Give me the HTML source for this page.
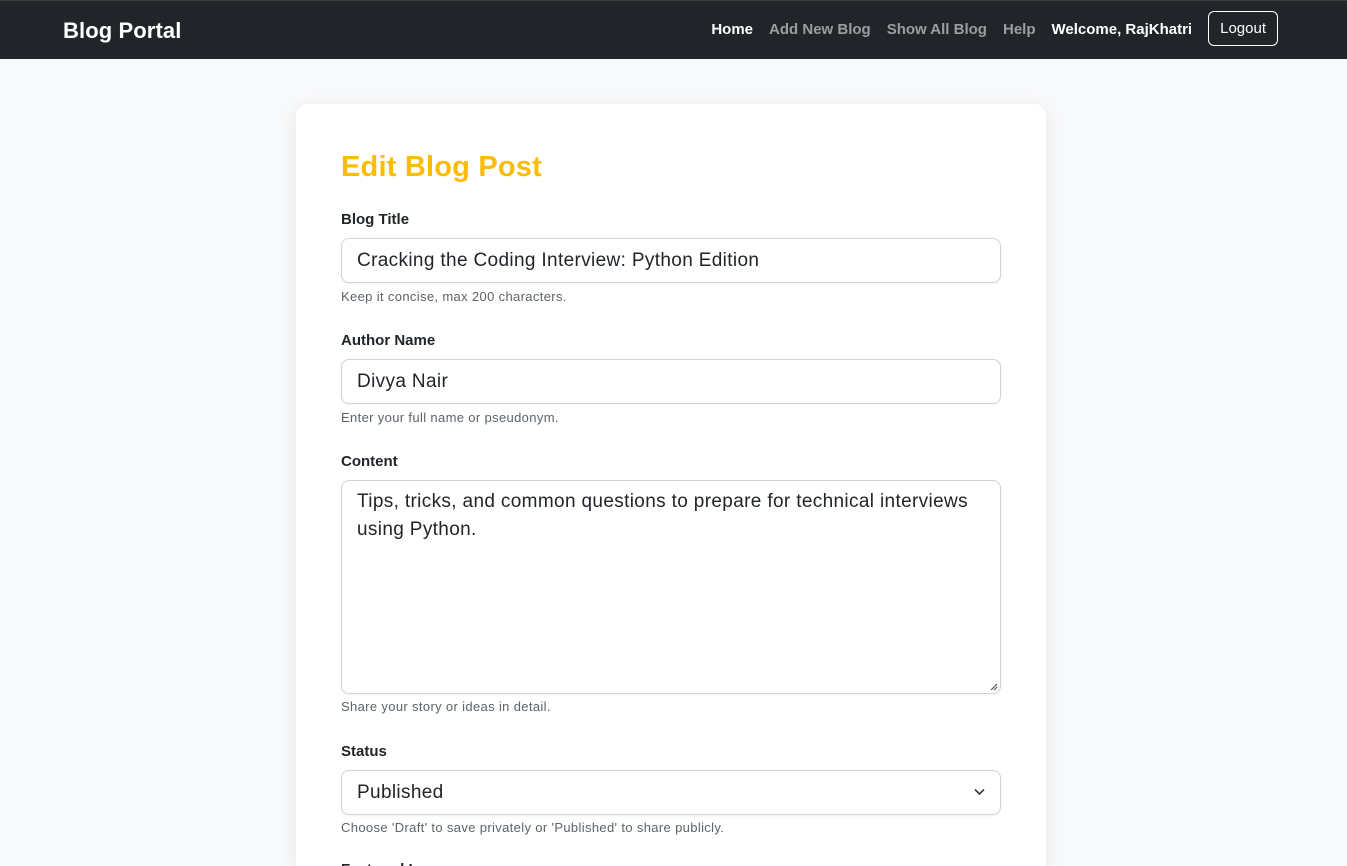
<!DOCTYPE html>
<html><head><meta charset="utf-8"><style>
*{box-sizing:border-box;margin:0;padding:0}
html,body{width:1347px;height:866px;overflow:hidden}
body{background:#f8f9fa;font-family:"Liberation Sans",sans-serif;color:#212529;position:relative}
.nav{height:59px;background:#212529;border-top:1px solid #3a3d40;position:relative}
.brand{position:absolute;left:63px;top:17px;color:#fff;font-size:22px;font-weight:bold;letter-spacing:0.1px}
.links{position:absolute;right:69px;top:10px;display:flex;align-items:center;font-size:15px;font-weight:bold;letter-spacing:0px}
.links span{margin-right:16px;color:rgba(255,255,255,.55);position:relative;top:1px}
.links .w{color:#fff}
.btn{border:1px solid #fff;border-radius:6px;color:#fff;padding:8px 11px;font-weight:normal;font-size:15px}
.card{position:absolute;left:296px;top:104px;width:750px;height:762px;background:#fff;border-radius:12px 12px 0 0;box-shadow:0 4px 16px rgba(0,0,0,.08);padding:0 45px;overflow:hidden}
h1{color:#fbbc05;font-size:29px;font-weight:bold;margin-top:47px;letter-spacing:0.2px}
.lbl{font-size:15px;font-weight:bold;position:absolute;left:45px}
.inp{position:absolute;left:45px;width:660px;height:45px;border:1px solid #ced4da;border-radius:8px;font-size:19px;padding:11px 15px;box-shadow:0 1px 2px rgba(0,0,0,.06);letter-spacing:0.35px}
.help{position:absolute;left:45px;font-size:13px;color:#5c636a;letter-spacing:0.35px}
</style></head><body>
<div class="nav"><div class="brand">Blog Portal</div>
<div class="links"><span class="w">Home</span><span>Add New Blog</span><span>Show All Blog</span><span>Help</span><span class="w">Welcome, RajKhatri</span><div class="btn">Logout</div></div></div>
<div class="card">
<h1>Edit Blog Post</h1>
<div class="lbl" style="top:107px">Blog Title</div>
<div class="inp" style="top:134px">Cracking the Coding Interview: Python Edition</div>
<div class="help" style="top:185px">Keep it concise, max 200 characters.</div>
<div class="lbl" style="top:228px">Author Name</div>
<div class="inp" style="top:255px">Divya Nair</div>
<div class="help" style="top:306px">Enter your full name or pseudonym.</div>
<div class="lbl" style="top:349px">Content</div>
<div class="inp" style="top:376px;height:214px;line-height:28px;padding-top:7px">Tips, tricks, and common questions to prepare for technical interviews using Python.
<svg style="position:absolute;right:2px;bottom:2px" width="10" height="10"><path d="M9 3L3 9M9 6L6 9" stroke="#555" stroke-width="1.2"/></svg></div>
<div class="help" style="top:595px">Share your story or ideas in detail.</div>
<div class="lbl" style="top:639px">Status</div>
<div class="inp" style="top:666px">Published<svg style="position:absolute;right:15px;top:17px" width="11" height="8"><path d="M1 1.5L5.5 6L10 1.5" fill="none" stroke="#343a40" stroke-width="1.6"/></svg></div>
<div class="help" style="top:716px">Choose 'Draft' to save privately or 'Published' to share publicly.</div>
<div class="lbl" style="top:757px">Featured Image</div>
</div>
</body></html>
